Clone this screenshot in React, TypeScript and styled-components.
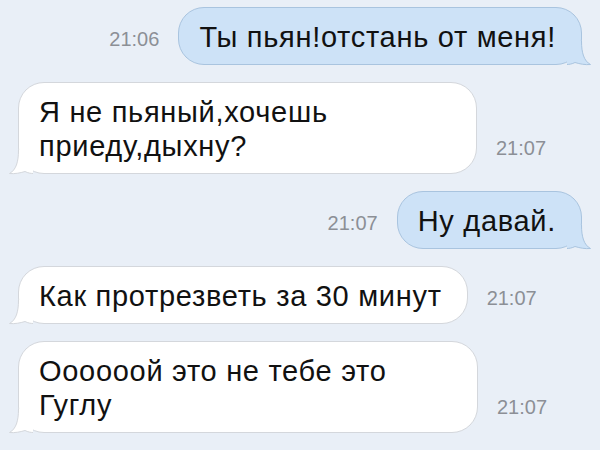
import React from "react";
import styled, { createGlobalStyle } from "styled-components";

const GlobalStyle = createGlobalStyle`
  html, body {
    margin: 0;
    padding: 0;
    background: #e9eff7;
  }
  body {
    font-family: "Liberation Sans", Arial, sans-serif;
  }
`;

const Chat = styled.div`
  width: 600px;
  height: 450px;
  box-sizing: border-box;
  padding: 7px 18px 0 18px;
  display: flex;
  flex-direction: column;
  gap: 17px;
  background: #e9eff7;
  overflow: hidden;
`;

const Row = styled.div<{ $out?: boolean }>`
  display: flex;
  align-items: flex-end;
  justify-content: ${(p) => (p.$out ? "flex-end" : "flex-start")};
  gap: 19px;
`;

const Time = styled.span`
  font-size: 20px;
  line-height: 20px;
  color: #8c8f96;
  padding-bottom: 16px;
  white-space: nowrap;
`;

const Bubble = styled.div<{ $out?: boolean; $w?: number }>`
  position: relative;
  box-sizing: border-box;
  width: ${(p) => (p.$w ? `${p.$w}px` : "auto")};
  padding: 12px 25px 10px 20px;
  font-size: 29px;
  letter-spacing: 0.7px;
  line-height: 34px;
  color: #111;
  border-radius: 26px;
  background: ${(p) => (p.$out ? "#cde2f7" : "#ffffff")};
  border: 1px solid ${(p) => (p.$out ? "#a9c4df" : "#d4d7dc")};
`;

const Tail = styled.svg<{ $out?: boolean }>`
  position: absolute;
  bottom: -1px;
  ${(p) => (p.$out ? "right: -10px;" : "left: -10px; transform: scaleX(-1);")}
  width: 24px;
  height: 24px;
  overflow: visible;
`;

const BubbleTail = ({ out }: { out?: boolean }) => {
  const fill = out ? "#cde2f7" : "#ffffff";
  const stroke = out ? "#a9c4df" : "#d4d7dc";
  return (
    <Tail $out={out} viewBox="0 0 24 24">
      <path
        d="M14.5 0 C14.5 12 17 20 23.5 23.5 C18 24 13 23 8 21.5 C5 23 2 23.5 0 23.5 L0 0 Z"
        fill={fill}
      />
      <path
        d="M14.5 0 C14.5 12 17 20 23.5 23.5 C18 24 13 23 8 21.5 C5 23 2 23.5 0 23.5"
        fill="none"
        stroke={stroke}
        strokeWidth={1}
      />
    </Tail>
  );
};

type Msg = { out?: boolean; text: string; time: string; w?: number };

const messages: Msg[] = [
  { out: true, text: "Ты пьян!отстань от меня!", time: "21:06" },
  { text: "Я не пьяный,хочешь приеду,дыхну?", time: "21:07", w: 459 },
  { out: true, text: "Ну давай.", time: "21:07" },
  { text: "Как протрезветь за 30 минут", time: "21:07" },
  { text: "Оооооой это не тебе это Гуглу", time: "21:07", w: 460 },
];

export default function App() {
  return (
    <>
      <GlobalStyle />
      <Chat>
        {messages.map((m, i) =>
          m.out ? (
            <Row $out key={i}>
              <Time>{m.time}</Time>
              <Bubble $out>
                {m.text}
                <BubbleTail out />
              </Bubble>
            </Row>
          ) : (
            <Row key={i}>
              <Bubble $w={m.w}>
                {m.text}
                <BubbleTail />
              </Bubble>
              <Time>{m.time}</Time>
            </Row>
          )
        )}
      </Chat>
    </>
  );
}
